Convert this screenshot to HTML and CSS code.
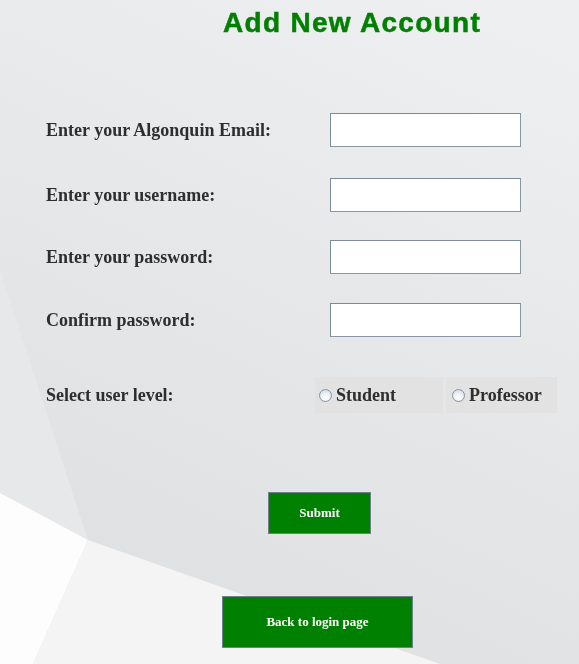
FILE: index.html
```html
<!DOCTYPE html>
<html lang="en">
<head>
<meta charset="utf-8">
<title>Add New Account</title>
<link rel="stylesheet" href="styles.css">
</head>
<body>
<svg class="backdrop" viewBox="0 0 579 664" preserveAspectRatio="none" aria-hidden="true">
  <defs>
    <linearGradient id="bg" x1="0.8" y1="0" x2="0.4" y2="1">
      <stop offset="0" stop-color="#eeeff0"/>
      <stop offset="0.5" stop-color="#e6e7e8"/>
      <stop offset="1" stop-color="#dfe0e2"/>
    </linearGradient>
  </defs>
  <rect width="579" height="664" fill="url(#bg)"/>
  <polygon points="0,270 88,540 0,493" fill="#e7e8e9"/>
  <polygon points="0,493 88,540 33,664 0,664" fill="#fdfdfd"/>
  <polygon points="88,540 440,664 33,664" fill="#f4f4f5"/>
</svg>

<main class="page">
  <h1 class="title">Add New Account</h1>

  <form class="form">
    <div class="row">
      <label class="label" for="email">Enter your Algonquin Email:</label>
      <input class="field" id="email" type="text">
    </div>
    <div class="row r2">
      <label class="label" for="user">Enter your username:</label>
      <input class="field" id="user" type="text">
    </div>
    <div class="row r3">
      <label class="label" for="pw">Enter your password:</label>
      <input class="field" id="pw" type="password">
    </div>
    <div class="row r4">
      <label class="label" for="pw2">Confirm password:</label>
      <input class="field" id="pw2" type="password">
    </div>
    <div class="row radio-row">
      <span class="label label-radio">Select user level:</span>
      <div class="choices">
        <label class="choice choice-student"><input class="radio" type="radio" name="level">Student</label>
        <label class="choice choice-prof"><input class="radio" type="radio" name="level">Professor</label>
      </div>
    </div>

    <div class="actions">
      <button class="btn btn-submit" type="button">Submit</button>
    </div>
    <div class="actions actions-back">
      <button class="btn btn-back" type="button">Back to login page</button>
    </div>
  </form>
</main>
</body>
</html>
```

FILE: styles.css
```css
html, body {
  margin: 0;
  padding: 0;
}
body {
  width: 579px;
  height: 664px;
  overflow: hidden;
  font-family: "Liberation Serif", "Times New Roman", serif;
  color: #2e2e2e;
  background: #e6e7e8;
}
.backdrop {
  position: fixed;
  left: 0;
  top: 0;
  width: 579px;
  height: 664px;
  z-index: -1;
}
.page {
  display: flex;
  flex-direction: column;
}
.title {
  margin: 0;
  padding: 8px 0 0 125px;
  height: 30px;
  line-height: 30px;
  text-align: center;
  font-family: "Liberation Sans", Arial, sans-serif;
  font-weight: 900;
  font-size: 28px;
  letter-spacing: 1.3px;
  color: #008000;
  -webkit-text-stroke: 0.5px #008000;
}
.form {
  display: flex;
  flex-direction: column;
  margin-top: 75px;
  padding-left: 46px;
}
.row {
  display: flex;
  align-items: center;
  height: 34px;
}
.r2 { margin-top: 31px; }
.r3 { margin-top: 28px; }
.r4 { margin-top: 29px; }
.label {
  width: 284px;
  font-weight: bold;
  font-size: 18px;
}
.field {
  box-sizing: border-box;
  width: 191px;
  height: 34px;
  margin: 0;
  padding: 2px 4px;
  background: #ffffff;
  border: 1px solid #7d8b98;
  border-right-color: #8a96a2;
  border-bottom-color: #8a96a2;
  font: 16px "Liberation Serif", serif;
}
.radio-row {
  margin-top: 40px;
  height: 36px;
}
.label-radio {
  width: 269px;
}
.choices {
  display: flex;
  gap: 3px;
  height: 36px;
}
.choice {
  box-sizing: border-box;
  display: flex;
  align-items: center;
  height: 36px;
  padding-left: 4px;
  background: #e2e2e3;
  font-weight: bold;
  font-size: 18px;
  color: #2e2e2e;
}
.choice-student { width: 128px; }
.choice-prof { width: 111px; padding-left: 6px; }
.radio {
  appearance: none;
  -webkit-appearance: none;
  box-sizing: border-box;
  width: 13px;
  height: 13px;
  margin: 0 4px 0 0;
  border-radius: 50%;
  border: 1px solid #8494a6;
  background: radial-gradient(circle at 50% 70%, #ffffff 0%, #eef1f5 45%, #c9d1db 100%);
}
.actions {
  display: flex;
  margin-top: 79px;
  padding-left: 222px;
}
.actions-back {
  margin-top: 62px;
  padding-left: 176px;
}
.btn {
  box-sizing: border-box;
  margin: 0;
  padding: 0;
  background: #008000;
  color: #ffffff;
  border: 1px solid #6f7f8f;
  font-family: "Liberation Serif", "Times New Roman", serif;
  font-weight: bold;
  font-size: 13px;
  cursor: pointer;
}
.btn-submit {
  width: 103px;
  height: 42px;
}
.btn-back {
  width: 191px;
  height: 52px;
}
```
